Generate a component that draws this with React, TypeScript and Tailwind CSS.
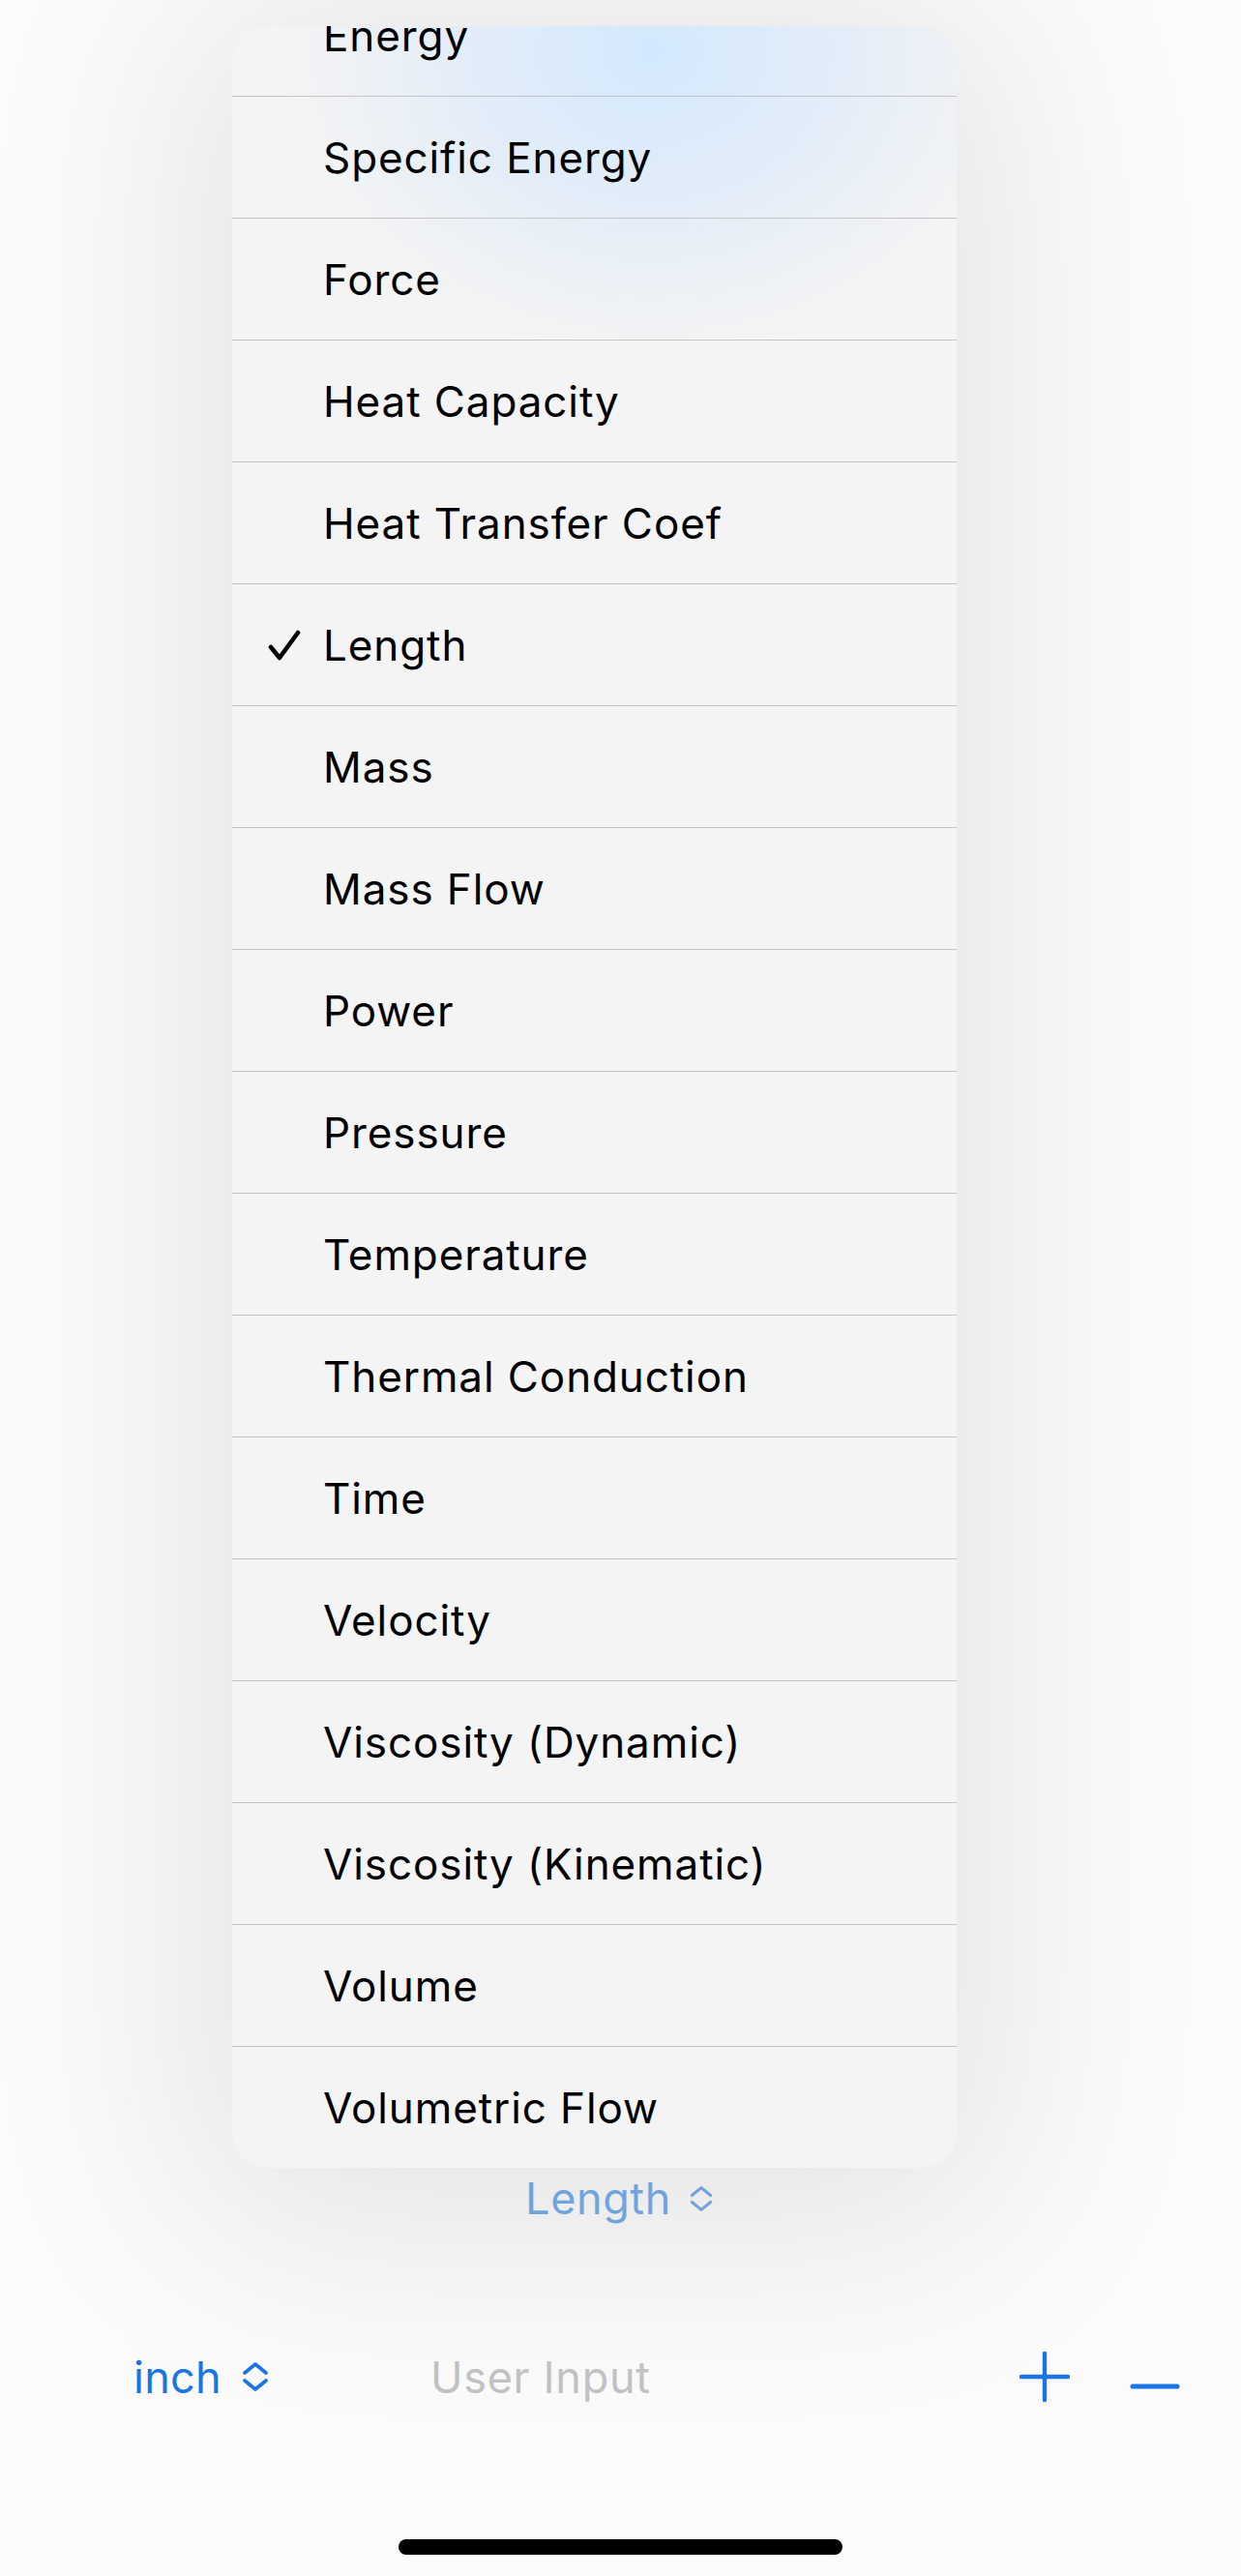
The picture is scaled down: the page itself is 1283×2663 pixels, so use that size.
import React from "react";

const units = [
  "Energy",
  "Specific Energy",
  "Force",
  "Heat Capacity",
  "Heat Transfer Coef",
  "Length",
  "Mass",
  "Mass Flow",
  "Power",
  "Pressure",
  "Temperature",
  "Thermal Conduction",
  "Time",
  "Velocity",
  "Viscosity (Dynamic)",
  "Viscosity (Kinematic)",
  "Volume",
  "Volumetric Flow",
];

const selected = "Length";

const Chevrons: React.FC<{ className?: string }> = ({ className }) => (
  <svg viewBox="0 0 30 32" className={className} fill="none" stroke="currentColor" strokeWidth="3.6" strokeLinecap="round" strokeLinejoin="round">
    <polyline points="4,12 15,3 26,12" />
    <polyline points="4,20 15,29 26,20" />
  </svg>
);

const Check: React.FC = () => (
  <svg viewBox="0 0 34 32" className="w-[34px] h-[32px]" fill="none" stroke="#000" strokeWidth="4.6" strokeLinecap="round" strokeLinejoin="round">
    <polyline points="3,18 12,29 31,3" />
  </svg>
);

const App: React.FC = () => {
  return (
    <div className="w-[1283px] h-[2663px] overflow-hidden bg-[#fbfbfb] flex flex-col font-['Inter',sans-serif]">
      {/* Unit menu */}
      <div className="mt-[27px] ml-[240px] w-[749px] h-[2214px] rounded-[36px] overflow-hidden bg-[#f4f4f4] bg-[radial-gradient(ellipse_470px_390px_at_58%_25px,#d3e8fd_0%,rgba(218,233,250,0.65)_42%,rgba(244,244,244,0)_82%)] shadow-[0_20px_230px_50px_rgba(0,0,0,0.09)] shrink-0">
        <div className="mt-[-53px]">
          {units.map((u, i) => (
            <div
              key={u}
              className={`h-[126px] flex items-center ${i < units.length - 1 ? "border-b border-[#c4c4c6]" : ""}`}
            >
              <div className="w-[94px] shrink-0 pl-[37px] flex items-center">
                {u === selected && <Check />}
              </div>
              <span className="text-[44px] text-black tracking-[0.9px] leading-none">{u}</span>
            </div>
          ))}
        </div>
      </div>

      {/* Category picker */}
      <div className="mt-[4px] flex justify-center items-center gap-[16px] text-[#70a4dc]">
        <span className="text-[45px] leading-[56px] tracking-[0.6px]">Length</span>
        <Chevrons className="w-[30px] h-[28px]" />
      </div>

      {/* Input row */}
      <div className="mt-[126px] flex items-center h-[60px]">
        <div className="ml-[138px] flex items-center gap-[20px] text-[#1b74e4]">
          <span className="text-[45px] leading-none tracking-[0.3px]">inch</span>
          <Chevrons className="w-[30px] h-[32px]" />
        </div>
        <span className="ml-[166px] text-[45px] leading-none text-[#c1c1c3] tracking-[0.7px]">User Input</span>
        <div className="ml-auto mr-[63px] flex items-center gap-[62px] text-[#1b74e4]">
          <svg viewBox="0 0 52 52" className="w-[52px] h-[52px]" fill="none" stroke="currentColor" strokeWidth="4.4" strokeLinecap="round">
            <line x1="26" y1="2" x2="26" y2="50" />
            <line x1="2" y1="26" x2="50" y2="26" />
          </svg>
          <svg viewBox="0 0 52 52" className="w-[52px] h-[52px] mt-[20px]" fill="none" stroke="currentColor" strokeWidth="5" strokeLinecap="round">
            <line x1="3" y1="26" x2="49" y2="26" />
          </svg>
        </div>
      </div>

      {/* Home indicator */}
      <div className="mt-auto mb-[22px] flex justify-center">
        <div className="w-[459px] h-[16px] rounded-full bg-black" />
      </div>
    </div>
  );
};

export default App;
